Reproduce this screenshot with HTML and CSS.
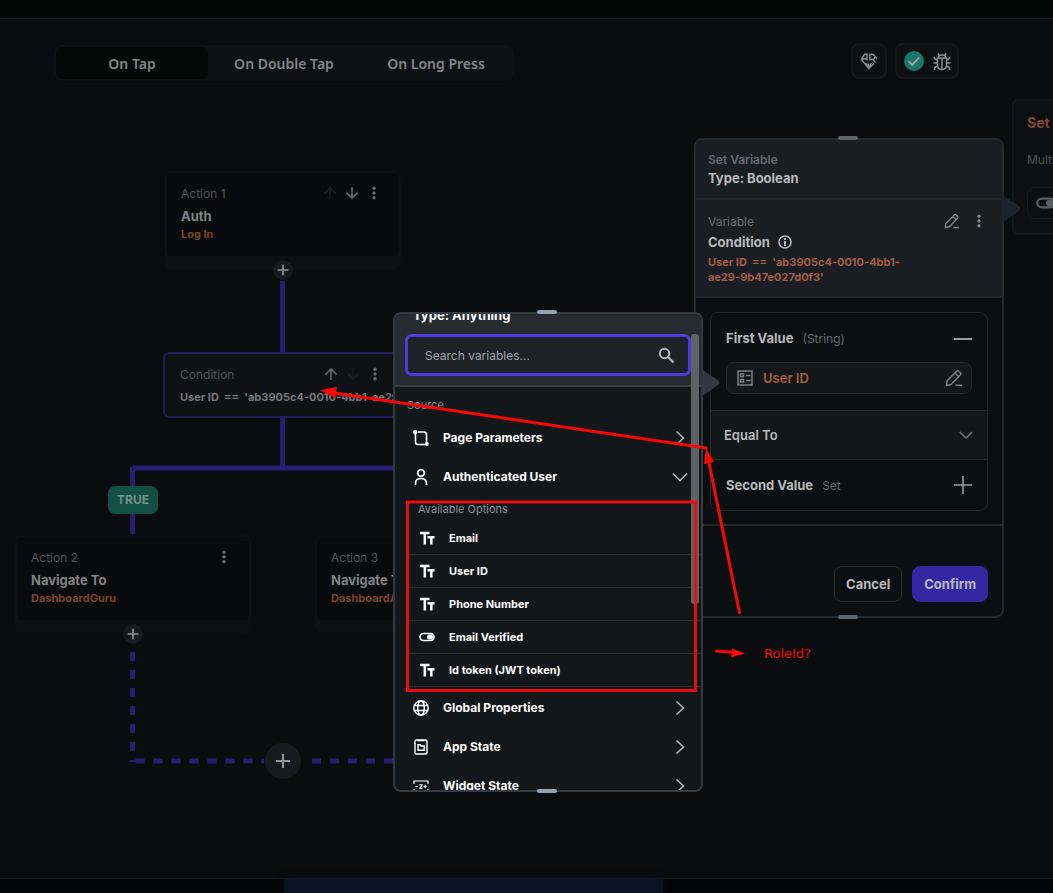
FILE: index.html
```html
<!DOCTYPE html>
<html lang="en">
<head>
<meta charset="utf-8">
<meta name="viewport" content="width=device-width, initial-scale=1">
<title>Action flow editor</title>
<link rel="stylesheet" href="styles.css">
</head>
<body>
<svg class="sprite" aria-hidden="true">
  <symbol id="up" viewBox="0 0 14 14"><path d="M7 13V2M1.500 7.500 7 2l5.500 5.500" fill="none" stroke="currentColor" stroke-width="1.600"/></symbol>
  <symbol id="down" viewBox="0 0 14 14"><path d="M7 1v11M1.500 6.500 7 12l5.500-5.500" fill="none" stroke="currentColor" stroke-width="1.600"/></symbol>
  <symbol id="dots" viewBox="0 0 14 14"><g fill="currentColor"><circle cx="7" cy="2.200" r="1.700"/><circle cx="7" cy="7" r="1.700"/><circle cx="7" cy="11.800" r="1.700"/></g></symbol>
  <symbol id="plus" viewBox="0 0 18 18"><path d="M9 1v16M1 9h16" stroke="currentColor" stroke-width="2.400"/></symbol>
  <symbol id="pen" viewBox="0 0 18 18"><g fill="none" stroke="currentColor" stroke-width="1.500" stroke-linejoin="round"><path d="M2 12 11.500 2.200q1-1 2.200 0l1.600 1.500q1.200 1.200 0 2.300L6 15.500l-4.500.8z"/><path d="m10 4 3.700 3.700M10.500 16.300H17"/></g></symbol>
  <symbol id="right" viewBox="0 0 16 16"><path d="m4.500 1.500 7 6.500-7 6.500" fill="none" stroke="currentColor" stroke-width="1.600"/></symbol>
  <symbol id="chevdown" viewBox="0 0 16 16"><path d="m1 4.500 7 7 7-7" fill="none" stroke="currentColor" stroke-width="1.600"/></symbol>
  <symbol id="type" viewBox="0 0 16 16"><path d="M1 3h9.500M5.800 3v11.500M8.500 7.300h7M12.300 7.300v7.200" fill="none" stroke="currentColor" stroke-width="2.500"/></symbol>
  <symbol id="toggle" viewBox="0 0 16 16"><rect x="1" y="4.500" width="14" height="7" rx="3.500" fill="none" stroke="currentColor" stroke-width="1.700"/><rect x="8" y="5.500" width="6" height="5" rx="2.500" fill="currentColor"/></symbol>
</svg>

<div class="app">
  <header class="strip"></header>
  <main class="canvas">
    <div class="toolbar">
      <nav class="tabs" aria-label="Trigger">
        <button class="tab active">On Tap</button><button class="tab">On Double Tap</button><button class="tab">On Long Press</button>
      </nav>
      <div class="tools">
        <button class="tool" aria-label="Generate">
          <svg width="18" height="18" viewBox="0 0 18 18"><g fill="none" stroke="currentColor" stroke-width="1.500"><path d="M7 8.500V2.300H4.500L1.300 7.500l6.900 8.200h1.500L14 11.500M1.500 7H7M10 8.500V2.300h2.800l2.700 2.400-1.800 2.500H10M12.500 7.500l3.200 3M15.500 4.700l1.600 2.500M6 11l2.500 4.500v-4M11.500 11 9 15.500"/></g></svg>
        </button>
        <button class="tool wide" aria-label="Issues">
          <svg width="20" height="20" viewBox="0 0 20 20"><circle cx="10" cy="10" r="10" fill="#1c7566"/><path d="m4.500 10.200 3.700 3.700 7-7.400" fill="none" stroke="#a0a5a6" stroke-width="1.800"/></svg>
          <svg width="18" height="20" viewBox="0 0 18 20"><g fill="none" stroke="currentColor" stroke-width="1.500"><path d="M4.500 7h9v6.500q0 5-4.500 5t-4.500-5zM9 7v11.500M5.500 7Q5.500 4 9 4t3.500 3M6.500 4.500 5 2.500M11.500 4.500 13 2.500M4.500 9 1.500 7.500V6M13.500 9l3-1.500V6M4.500 12H.5M13.500 12h4M4.500 15l-3 1.500V19M13.500 15l3 1.500V19"/></g></svg>
        </button>
      </div>
    </div>
  </main>
  <footer class="strip bottom"><div class="glow"></div></footer>

  <svg class="overlay" width="1053" height="893" aria-hidden="true">
    <g stroke="#281d73" stroke-width="5" fill="none">
      <path d="M282.500 281v72M282.500 417v51M394 468H132.500M132.500 467v67"/>
      <path d="M132.500 652v110" stroke-dasharray="9 9"/>
      <path d="M135.500 761H264" stroke-dasharray="9 9"/>
      <path d="M312 761h84" stroke-dasharray="9 9"/>
    </g>
  </svg>

  <article class="node action auth">
    <div class="card">
      <div class="row"><span class="muted">Action 1</span><span class="icons"><svg class="i14 faint"><use href="#up"/></svg><svg class="i14"><use href="#down"/></svg><svg class="i14"><use href="#dots"/></svg></span></div>
      <h2>Auth</h2><p class="accent">Log In</p>
    </div>
  </article>
  <article class="node condition">
    <div class="row"><span class="muted">Condition</span><span class="icons"><svg class="i14"><use href="#up"/></svg><svg class="i14 faint"><use href="#down"/></svg><svg class="i14"><use href="#dots"/></svg></span></div>
    <p class="expr">User ID&nbsp; ==&nbsp; 'ab3905c4-0010-4bb1-ae29</p>
  </article>
  <span class="node badge">TRUE</span>
  <article class="node action nav-guru">
    <div class="card">
      <div class="row"><span class="muted">Action 2</span><span class="icons"><svg class="i14"><use href="#dots"/></svg></span></div>
      <h2>Navigate To</h2><p class="accent">DashboardGuru</p>
    </div>
  </article>
  <article class="node action nav-admin">
    <div class="card">
      <div class="row"><span class="muted">Action 3</span></div>
      <h2>Navigate To</h2><p class="accent">DashboardAdmin</p>
    </div>
  </article>
  <button class="node add add-auth" aria-label="Add action"><svg width="12" height="12"><use href="#plus"/></svg></button>
  <button class="node add add-guru" aria-label="Add action"><svg width="12" height="12"><use href="#plus"/></svg></button>
  <button class="node add big" aria-label="Add action"><svg width="16" height="16"><use href="#plus"/></svg></button>

  <section class="node side">
    <h2>Set Variables</h2>
    <p class="muted">Multiple</p>
    <div class="pill"><svg width="20" height="20"><use href="#toggle"/></svg></div>
  </section>

  <section class="node panel">
    <i class="grip top"></i><i class="grip end"></i>
    <svg class="pointer" width="19" height="28" viewBox="0 0 19 28"><path d="M0 0 17 11q3 3 0 5L0 28z" fill="#1e242d"/></svg>
    <header class="panel-head"><p class="label">Set Variable</p><h3>Type: Boolean</h3></header>
    <div class="panel-var">
      <div class="row"><span class="vlabel">Variable</span><span class="icons"><svg class="i16"><use href="#pen"/></svg><svg class="i14"><use href="#dots"/></svg></span></div>
      <h3>Condition <svg width="14" height="14" viewBox="0 0 14 14"><circle cx="7" cy="7" r="6" fill="none" stroke="currentColor" stroke-width="1.600"/><path d="M7 3v2M7 6v5" stroke="currentColor" stroke-width="2"/></svg></h3>
      <p class="code">User ID&nbsp; ==&nbsp; 'ab3905c4-0010-4bb1-<br>ae29-9b47e027d0f3'</p>
    </div>
    <div class="panel-body">
      <div class="values">
        <div class="first">
          <div class="row"><h3>First Value <small>(String)</small></h3><svg width="18" height="18" viewBox="0 0 18 18"><path d="M0 9h18" stroke="currentColor" stroke-width="2"/></svg></div>
          <button class="field"><svg width="16" height="16" viewBox="0 0 16 16"><g fill="none" stroke="currentColor" stroke-width="1.500"><rect x="1" y="1" width="14" height="14"/><path d="M3.500 4h3v2.500h-3zM3.500 9.500h3V12h-3zM9 5.500h4.500M9 10.500h4.500"/></g></svg><span>User ID</span><svg width="18" height="18"><use href="#pen"/></svg></button>
        </div>
        <button class="operator">Equal To <svg class="i14"><use href="#chevdown"/></svg></button>
        <div class="row second"><h3>Second Value <small>Set</small></h3><svg width="18" height="18" viewBox="0 0 18 18"><path d="M9 0v18M0 9h18" stroke="currentColor" stroke-width="1.600"/></svg></div>
      </div>
    </div>
    <footer class="panel-foot"><button class="btn">Cancel</button><button class="btn primary">Confirm</button></footer>
  </section>

  <section class="node popup">
    <i class="grip top"></i><i class="grip end"></i>
    <svg class="pointer" width="19" height="28" viewBox="0 0 19 28"><path d="M0 0 17 11q3 3 0 5L0 28z" fill="#323841"/></svg>
    <div class="popup-clip">
      <header class="popup-head">
        <h3>Type: Anything</h3>
        <label class="search"><input type="text" placeholder="Search variables..." aria-label="Search variables"><svg width="17" height="17" viewBox="0 0 17 17"><circle cx="6.500" cy="6.500" r="4.700" fill="none" stroke="currentColor" stroke-width="2"/><path d="m10 10 5.500 5.500" stroke="currentColor" stroke-width="2.300"/></svg></label>
      </header>
      <div class="list">
        <p class="group">Source</p>
        <button class="source"><svg class="i16" viewBox="0 0 16 16"><g fill="none" stroke="currentColor" stroke-width="1.600"><path d="M2.500 3v9q0 2.500 2.500 2.500h7M5 2h6q2.500 0 2.500 2.500V13"/></g><circle cx="2.200" cy="2.200" r="2.200" fill="currentColor"/><circle cx="13.800" cy="14" r="2" fill="currentColor"/></svg><span>Page Parameters</span><svg class="i16 chev"><use href="#right"/></svg></button>
        <button class="source"><svg class="i16" viewBox="0 0 16 16"><g fill="none" stroke="currentColor" stroke-width="1.700"><circle cx="8" cy="4" r="3.300"/><path d="M2.500 16v-1.500q0-5 5.500-5t5.500 5V16"/></g></svg><span>Authenticated User</span><svg class="i16 chev"><use href="#chevdown"/></svg></button>
        <div class="options">
          <p>Available Options</p>
          <button class="option"><svg class="i16"><use href="#type"/></svg>Email</button>
          <button class="option"><svg class="i16"><use href="#type"/></svg>User ID</button>
          <button class="option"><svg class="i16"><use href="#type"/></svg>Phone Number</button>
          <button class="option"><svg class="i16"><use href="#toggle"/></svg>Email Verified</button>
          <button class="option"><svg class="i16"><use href="#type"/></svg>Id token (JWT token)</button>
        </div>
        <button class="source"><svg class="i16" viewBox="0 0 16 16"><g fill="none" stroke="currentColor" stroke-width="1.500"><circle cx="8" cy="8" r="7.200"/><ellipse cx="8" cy="8" rx="3.300" ry="7.200"/><path d="M1.500 5.500h13M1.500 10.500h13"/></g></svg><span>Global Properties</span><svg class="i16 chev"><use href="#right"/></svg></button>
        <button class="source"><svg class="i16" viewBox="0 0 16 16"><g fill="none" stroke="currentColor" stroke-width="1.400"><rect x="2" y="1" width="12" height="14" rx="1.500"/><path d="M4.500 1.500h7M5 5.800h2l1 1.200h3.200v4.200H5z"/></g></svg><span>App State</span><svg class="i16 chev"><use href="#right"/></svg></button>
        <button class="source"><svg class="i16" viewBox="0 0 16 16"><g fill="none" stroke="currentColor" stroke-width="1.200"><path d="M1 6V3h14v3M1 11v3h14v-3M2.500 8.500H5M10.500 8.500h3.500M12.200 6.800v3.400M6.500 6.800h2.600L7 10.300h2.400"/></g></svg><span>Widget State</span><svg class="i16 chev"><use href="#right"/></svg></button>
      </div>
      <i class="thumb"></i>
    </div>
  </section>

  <svg class="overlay notes" width="1053" height="893">
    <rect x="407.500" y="502" width="288" height="188.500" fill="none" stroke="#e80c0c" stroke-width="3"/>
    <g fill="none" stroke="#f50808" stroke-width="3" stroke-linecap="round"><path d="M739.500 612.500 708 458M706 448 334 393M716.500 651l18 1.500"/></g>
    <g fill="#fb0505"><path d="m706 448 8 14-10 2zM320 390l17-3-2 11zM745 653.500l-14 4 1-9z"/></g>
  </svg>
  <span class="node note">RoleId?</span>
</div>
</body>
</html>
```
FILE: styles.css
```css
* { box-sizing: border-box; }
body { margin: 0; background: #0a0c0e; font-family: Inter, "Liberation Sans", sans-serif; font-size: 12px; color: #9a9b9d; }
h2, h3, p { margin: 0; }
button, input { font: inherit; color: inherit; }
button { padding: 0; border: 0; background: none; }
svg { flex: none; }
.sprite { position: absolute; width: 0; height: 0; }
.app { position: relative; display: flex; flex-direction: column; min-height: 100vh; overflow: hidden; }
.strip { height: 19px; background: #030504; border-bottom: 1px solid #17191a; }
.strip.bottom { height: 15px; background: #040506; border: 0; border-top: 1px solid #18191c; }
.glow { width: 36%; height: 100%; margin-left: 27%; background: #0a1321; box-shadow: 0 0 8px #0a1321; }
.canvas { flex: 1; }
.toolbar { display: flex; justify-content: space-between; align-items: flex-start; padding: 24px 94px 0 54px; }
.tabs { display: flex; margin-top: 2px; padding: 2px; border-radius: 8px; background: #0f1013; }
.tab { width: 152px; height: 32px; border-radius: 5px; font: 600 14px "Noto Sans", sans-serif; color: #858588; }
.tab.active { background: #060807; }
.tools { display: flex; gap: 8px; }
.tool { display: flex; align-items: center; justify-content: center; width: 36px; height: 36px; border: 2px solid #14171b; border-radius: 8px; background: #0d0f12; color: #8a8b8d; }
.tool.wide { width: 64px; gap: 9px; }

.node { position: absolute; }
.overlay { position: absolute; top: 0; left: 0; pointer-events: none; }
.row { display: flex; align-items: center; justify-content: space-between; }
.icons { display: flex; align-items: center; gap: 8px; color: #68696b; }
.i14 { width: 14px; height: 14px; }
.i16 { width: 16px; height: 16px; }
.faint { color: #1d1f21; }
.muted { color: #515356; }

.action { width: 236px; height: 98px; padding: 2px; border-radius: 6px; background: #0c1012; }
.card { height: 83px; padding: 11px 18px 0 14px; border-radius: 5px; background: #090a0b; }
.card .row { height: 18px; }
.card h2 { margin-top: 4px; font-size: 13px; line-height: 20px; color: #828385; }
.accent { font-size: 11px; font-weight: 700; line-height: 16px; color: #7c432c; }
.auth { left: 165px; top: 171px; }
.nav-guru { left: 15px; top: 535px; }
.nav-admin { left: 315px; top: 535px; }
.condition { left: 163px; top: 352px; width: 239px; height: 66px; padding: 11px 18px 0 15px; border: 2px solid #211b59; border-radius: 6px; background: #101114; }
.condition .row { height: 18px; }
.expr { margin-top: 6px; font-size: 11px; line-height: 16px; font-weight: 700; white-space: nowrap; color: #77787b; }
.badge { left: 108px; top: 486px; width: 50px; height: 28px; border-radius: 7px; background: #124f44; text-align: center; line-height: 28px; font-weight: 700; color: #76908b; }
.add { display: flex; align-items: center; justify-content: center; width: 20px; height: 20px; border-radius: 50%; background: #171b1f; color: #929394; }
.add-auth { left: 273px; top: 260px; }
.add-guru { left: 123px; top: 624px; }
.add.big { left: 265px; top: 743px; width: 36px; height: 36px; }

.side { left: 1012px; top: 99px; width: 240px; height: 136px; padding: 12px 13px; border: 2px solid #14171a; border-radius: 6px; background: #0d0f12; }
.side h2 { font-size: 14px; line-height: 20px; color: #874a34; }
.side .muted { margin-top: 18px; line-height: 18px; }
.pill { display: flex; align-items: center; height: 32px; margin-top: 18px; padding-left: 8px; border: 1px solid #171b1f; border-radius: 8px; color: #5c5d5f; }

.grip { position: absolute; left: 50%; width: 20px; height: 4px; margin-left: -11px; border-radius: 2px; z-index: 1; background: #5d666e; }
.grip.top { top: -4px; }
.grip.end { bottom: -3px; }
.pointer { position: absolute; left: 100%; top: 55px; }
h3 { font-size: 13px; font-weight: 700; line-height: 18px; }

.panel { left: 694px; top: 138px; width: 310px; border: 2px solid #22282e; border-radius: 8px; background: #0c0f12; color: #b9babb; }
.panel-head { height: 60px; padding: 11px 12px; border-bottom: 2px solid #22282e; border-radius: 6px 6px 0 0; background: #1a1d22; }
.label { line-height: 18px; font-weight: 600; color: #646a75; }
.panel-var { height: 98px; padding: 12px 16px 0 12px; border-bottom: 2px solid #22282e; background: #1a1d22; }
.panel-var .row { height: 18px; }
.panel-var .icons { gap: 12px; color: #80858c; }
.vlabel { color: #6b6f78; }
.panel-var h3 { display: flex; align-items: center; gap: 8px; margin-top: 2px; line-height: 20px; }
.code { margin-top: 3px; font-size: 11px; line-height: 15px; font-weight: 700; color: #a35f46; }
.panel-body { padding: 14px 14px 13px; border-bottom: 2px solid #22282e; }
.values { border: 1px solid #22272c; border-radius: 8px; }
.first { padding: 14px 15px 16px; }
.first .row, .second { color: #9a9c9f; }
.values h3 { color: #b9babb; line-height: 22px; }
small { margin-left: 6px; font-size: 12px; font-weight: 400; color: #62666d; }
.field { display: flex; align-items: center; width: 100%; height: 32px; margin-top: 12px; padding: 0 8px 0 10px; gap: 10px; border: 1px solid #23282d; border-radius: 8px; background: #13171a; color: #7c8085; }
.field span { flex: 1; text-align: left; font-size: 13px; font-weight: 600; color: #a95e40; }
.operator { display: flex; align-items: center; justify-content: space-between; width: 100%; height: 50px; padding: 0 14px 0 13px; border: solid #24292e; border-width: 1px 0; background: #13171a; font-size: 13px; font-weight: 600; }
.operator svg { color: #777a7e; }
.second { height: 50px; padding: 0 15px; }
.panel-foot { display: flex; justify-content: flex-end; gap: 10px; padding: 40px 14px 14px; }
.panel-foot .btn { height: 36px; padding: 0 11px; border: 1px solid #292d31; border-radius: 8px; font-size: 13px; font-weight: 700; }
.panel-foot .primary { border-color: #3527a4; background: #3527a4; }

.popup { left: 393px; top: 312px; width: 310px; height: 480px; border: 2px solid #343a42; border-radius: 8px; background: #14171a; color: #fff; }
.popup .grip { background: #95a1ac; }
.popup-clip { position: relative; height: 100%; border-radius: 6px; overflow: hidden; }
.popup-head { display: flex; flex-direction: column; justify-content: flex-end; height: 73px; padding: 0 10px; border-bottom: 2px solid #383d44; background: #262b31; overflow: hidden; }
.popup-head h3 { margin-left: 8px; flex: none; line-height: 20px; }
.search { display: flex; flex: none; align-items: center; height: 42px; margin: 9px 0; padding: 0 13px 0 17px; border: 3px solid #4e3bdf; border-radius: 7px; background: #1d2226; color: #b0b5bc; }
.search input { flex: 1; min-width: 0; padding: 0; border: 0; outline: 0; background: none; }
.search input::placeholder { color: #a0a6ae; opacity: 1; }
.group { padding: 9px 0 4px 12px; font-size: 11px; line-height: 18px; color: #8a929c; }
.source { display: flex; align-items: center; width: 100%; height: 39px; padding: 0 13px 0 18px; gap: 14px; font-weight: 700; }
.source span { flex: 1; text-align: left; }
.chev { color: #b0b5ba; }
.options { margin: 4px 0 1px 12px; }
.options p { padding: 0 0 4px 11px; font-size: 11px; line-height: 18px; color: #89929d; }
.option { display: flex; align-items: center; width: 100%; height: 33px; padding-left: 12px; gap: 14px; border-bottom: 1px solid #2a2e33; font-size: 11px; font-weight: 700; }
.thumb { position: absolute; right: 2px; top: 20px; width: 8px; height: 270px; border-radius: 3px; background: #5e6165; }
.note { left: 764px; top: 645px; font: 13px/18px "DejaVu Sans", sans-serif; color: #f50b0b; }
```
